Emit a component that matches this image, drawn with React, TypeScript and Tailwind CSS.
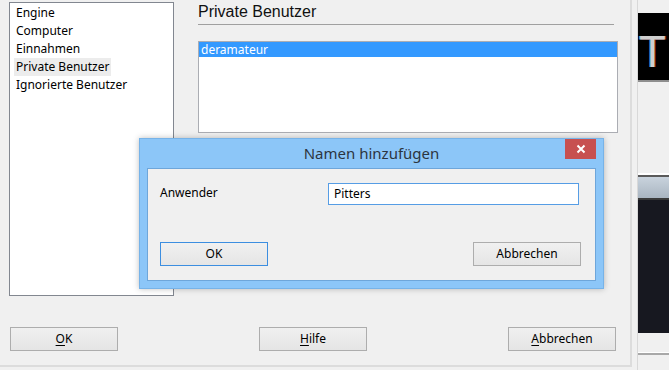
const items = ["Engine", "Computer", "Einnahmen", "Private Benutzer", "Ignorierte Benutzer"];

const WinButton = ({ children, focused = false }: { children: React.ReactNode; focused?: boolean }) => (
  <div
    className={`w-[108px] h-[24px] flex items-center justify-center border bg-gradient-to-b from-[#f0f0f0] to-[#e5e5e5] text-[12px] text-black ${
      focused ? "border-[#3c8ee0]" : "border-[#adadad]"
    }`}
  >
    {children}
  </div>
);

const AddNameDialog = () => {
  return (
    <div className="absolute left-[139px] top-[138px] w-[465px] h-[151px] bg-[#8cc6f8] border border-[#77b3e8] shadow-[0_0_6px_rgba(0,0,0,0.25)] flex flex-col px-[7px] pb-[7px]">
      <div className="relative h-[29px] flex items-center justify-center">
        <p className="text-[15px] text-[#2c3540] font-['Noto_Sans',sans-serif] -mt-[1px]">Namen hinzufügen</p>
        <div className="absolute right-[0px] top-0 w-[31px] h-[20px] bg-[#c75050] flex items-center justify-center">
          <svg width="10" height="10" viewBox="0 0 10 10">
            <path d="M1.5 1.5 L8.5 8.5 M8.5 1.5 L1.5 8.5" stroke="#fff" strokeWidth="2" />
          </svg>
        </div>
      </div>
      <div className="flex-1 bg-[#f0f0f0] border border-[#6ea6da] flex flex-col px-[12px] pt-[14px] pb-[14px]">
        <div className="flex items-start">
          <p className="w-[168px] text-[12px] pt-[1px]">Anwender</p>
          <div className="w-[251px] h-[22px] bg-white border border-[#569de5] flex items-center px-[5px] text-[12px]">
            Pitters
          </div>
        </div>
        <div className="mt-auto flex justify-between pr-[2px]">
          <WinButton focused>OK</WinButton>
          <WinButton>Abbrechen</WinButton>
        </div>
      </div>
    </div>
  );
};

export default function App() {
  return (
    <div className="relative w-[669px] h-[370px] overflow-hidden bg-[#f0f0f0] flex font-['Noto_Sans',sans-serif] text-black">
      {/* main window */}
      <div className="w-[632px] h-[367px] border-r-2 border-b-2 border-[#dcdcdc] flex flex-col">
        <div className="flex pt-[2px] pl-[9px] gap-[24px]">
          <div className="w-[165px] h-[294px] bg-white border border-[#828790] pt-[1px] pl-[4px]">
            {items.map((item) => (
              <div key={item} className="h-[18px] flex items-center">
                <span
                  className={`text-[12px] px-[2px] leading-[18px] ${
                    item === "Private Benutzer" ? "bg-[#ececec]" : ""
                  }`}
                >
                  {item}
                </span>
              </div>
            ))}
          </div>
          <div className="w-[420px] flex flex-col">
            <p className="text-[16px] leading-[20px] font-['Liberation_Sans',Arial,sans-serif] text-[#111] pt-[0px]">
              Private Benutzer
            </p>
            <div className="mt-[2px] w-[416px] h-[1px] bg-[#a0a0a0]" />
            <div className="mt-[16px] w-[420px] h-[92px] bg-white border border-[#abadb3]">
              <div className="h-[15px] bg-[#3399ff] text-white text-[12px] leading-[15px] pl-[2px]">
                deramateur
              </div>
            </div>
          </div>
        </div>
        <div className="mt-auto mb-[14px] pl-[10px] flex gap-[141px]">
          <WinButton>
            <span className="underline underline-offset-2">O</span>K
          </WinButton>
          <WinButton>
            <span className="underline underline-offset-2">H</span>ilfe
          </WinButton>
          <WinButton>
            <span className="underline underline-offset-2">A</span>bbrechen
          </WinButton>
        </div>
      </div>

      {/* neighbouring window at the right edge */}
      <div className="ml-[5px] flex-1 border-l border-[#d8d8d8] flex flex-col">
        <div className="mt-[13px] h-[67px] bg-black flex items-start pl-[1px] pt-[20px]">
          <span className="font-['Liberation_Sans',Arial,sans-serif] text-[44px] leading-[38px] text-[#cfcfcf] [text-shadow:1px_0_#8a2a1a,-1px_0_#4a8ac0]">
            T
          </span>
        </div>
        <div className="h-[2px] bg-[#8e8e8e]" />
        <div className="h-[91px]" />
        <div className="h-[2px] bg-white" />
        <div className="h-[2px] bg-[#5a5a5a]" />
        <div className="h-[21px] bg-gradient-to-b from-[#c9d3dd] to-[#a9b5c1]" />
        <div className="h-[2px] bg-[#3a3a3a]" />
        <div className="h-[133px] bg-[#171820]" />
        <div className="h-[19px]" />
        <div className="h-[1px] bg-white" />
        <div className="h-[2px] bg-[#a8a8a8]" />
      </div>

      <AddNameDialog />
    </div>
  );
}
